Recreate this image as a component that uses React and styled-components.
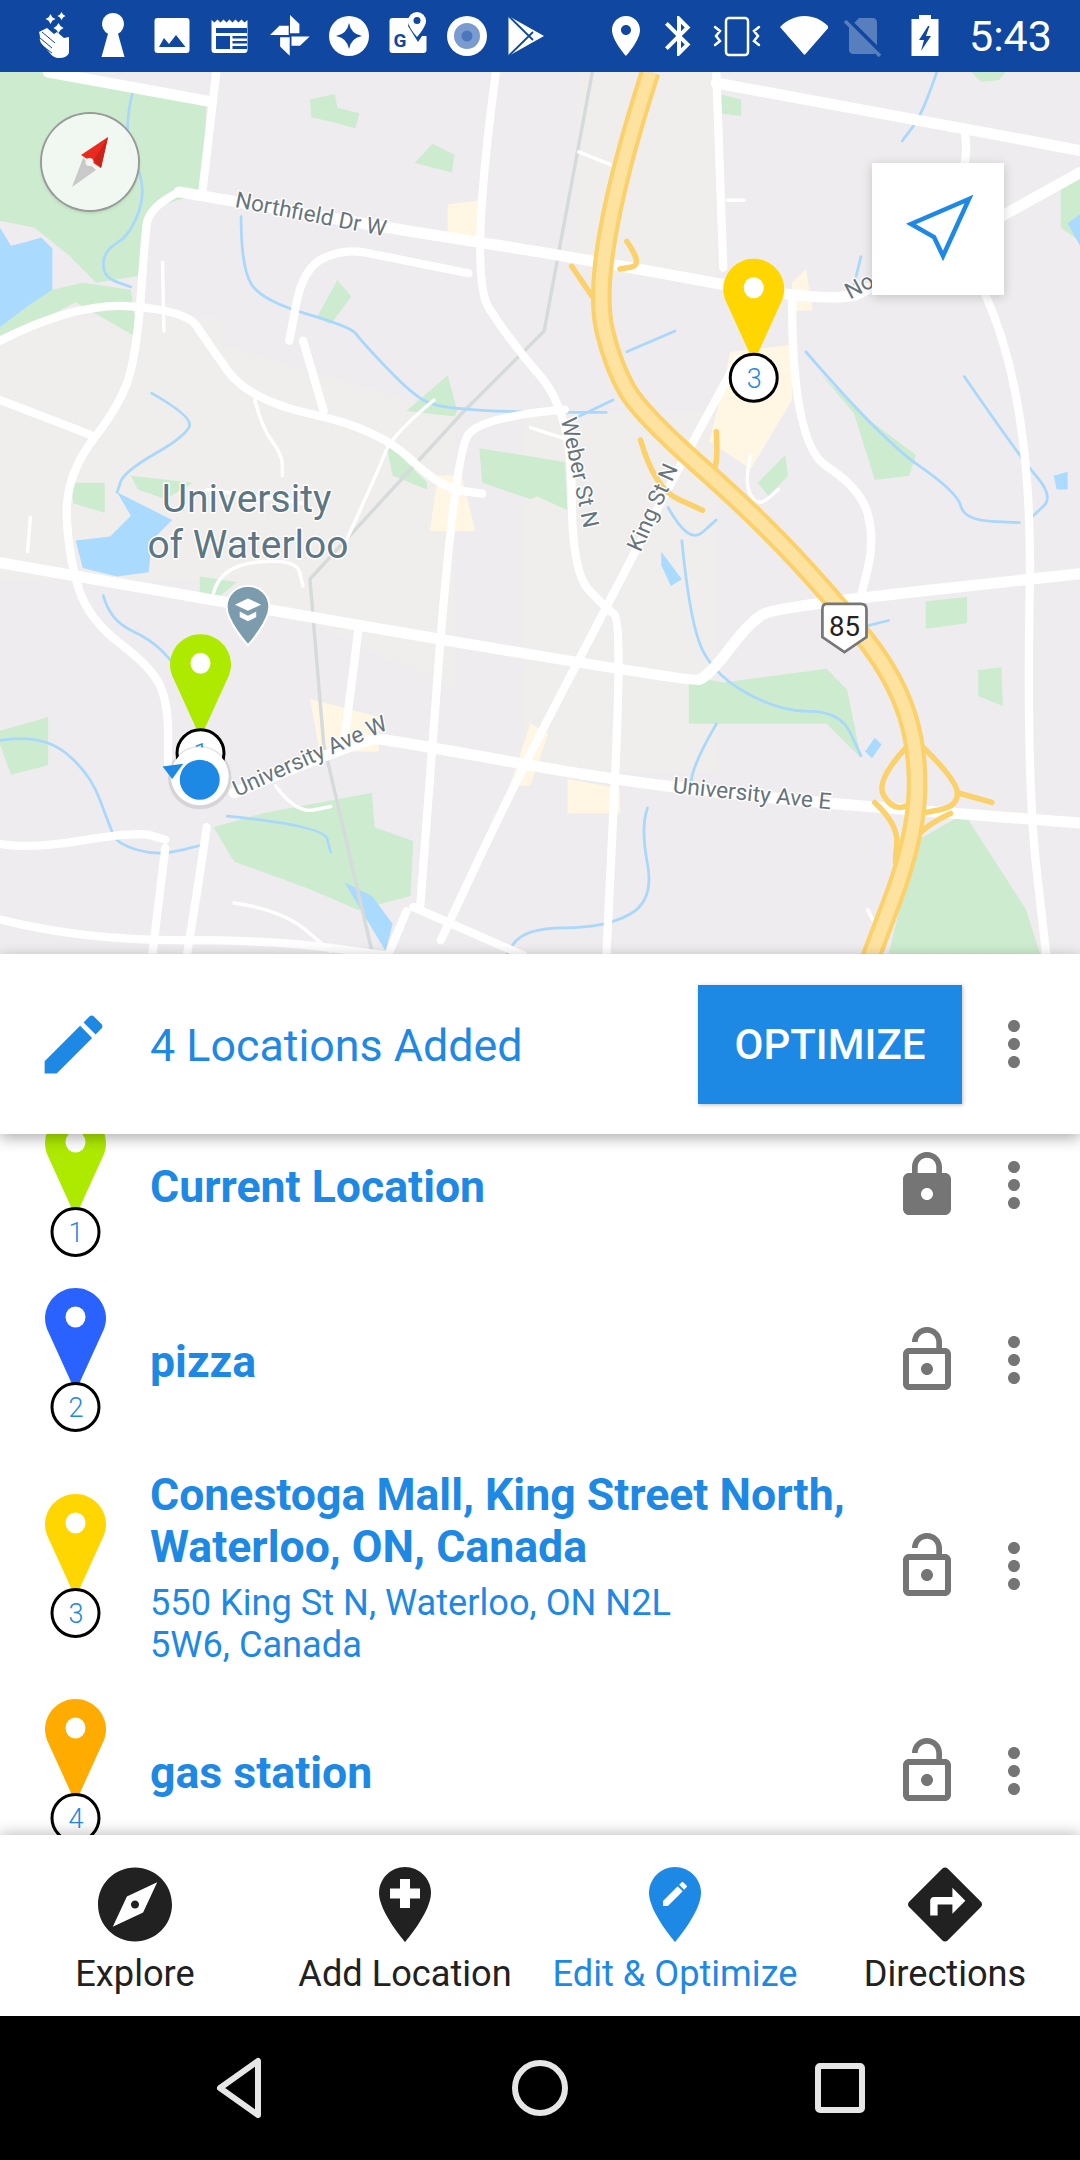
import React from 'react';
import styled, { createGlobalStyle } from 'styled-components';

const BLUE = '#1e88e5';
const GREY = '#757575';

const GlobalStyle = createGlobalStyle`
  html, body { margin: 0; padding: 0; background: #fff; }
  body { font-family: Roboto, "Liberation Sans", sans-serif; }
`;

const Screen = styled.div`
  width: 1080px;
  height: 2160px;
  display: flex;
  flex-direction: column;
  overflow: hidden;
  background: #fff;
`;

const StatusBar = styled.div`
  height: 72px;
  flex: none;
  display: flex;
  align-items: center;
  padding-left: 24px;
  background: #0f47a1;
`;

const StatusCell = styled.div`
  width: ${(p) => p.$w}px;
  flex: none;
  display: flex;
  justify-content: center;
`;

const RightGroup = styled.div`
  margin-left: 44px;
  display: flex;
  align-items: center;
`;

const Clock = styled.span`
  margin-left: 7px;
  font-size: 43px;
  color: #fff;
  line-height: 72px;
`;

const MapArea = styled.div`
  position: relative;
  height: 882px;
  flex: none;
`;

const MapSvg = styled.svg`
  display: block;
  width: 1080px;
  height: 882px;
`;

const MapText = styled.text`
  font-family: Roboto, sans-serif;
  paint-order: stroke;
  stroke: #fff;
  stroke-width: 2px;
  stroke-linejoin: round;
`;

const CompassButton = styled.div`
  position: absolute;
  left: 42px;
  top: 42px;
  width: 96px;
  height: 96px;
  border-radius: 50%;
  box-sizing: border-box;
  background: rgba(244, 249, 244, 0.92);
  box-shadow: 0 0 0 2px #9a9a9a, 0 2px 4px rgba(0, 0, 0, 0.2);
`;

const LocateButton = styled.div`
  position: absolute;
  left: 872px;
  top: 91px;
  width: 132px;
  height: 132px;
  background: #fff;
  box-shadow: 0 2px 10px rgba(0, 0, 0, 0.18);
`;

const Panel = styled.div`
  position: relative;
  z-index: 2;
  height: 180px;
  flex: none;
  display: flex;
  align-items: center;
  padding: 0 30px 0 35px;
  background: #fff;
  box-shadow: 0 4px 14px rgba(0, 0, 0, 0.32);
`;

const PanelIcon = styled.svg`
  width: 77px;
  height: 77px;
  flex: none;
`;

const PanelTitle = styled.div`
  flex: 1;
  margin-left: 38px;
  padding-top: 2px;
  font-size: 44.8px;
  color: ${BLUE};
`;

const OptimizeButton = styled.button`
  width: 264px;
  height: 119px;
  margin-right: 16px;
  padding: 0;
  border: none;
  background: ${BLUE};
  color: #fff;
  font-family: Roboto, sans-serif;
  font-size: 42px;
  font-weight: 500;
  box-shadow: 1px 1px 4px rgba(0, 0, 0, 0.25);
`;

const ActionIcon = styled.svg`
  width: 72px;
  height: 72px;
  flex: none;
  fill: ${GREY};
`;

const ListArea = styled.div`
  flex: 1;
  min-height: 0;
  overflow: hidden;
`;

const ListInner = styled.div`
  margin-top: -36.5px;
`;

const StopRow = styled.div`
  min-height: 175px;
  box-sizing: border-box;
  display: flex;
  align-items: center;
  padding: 0 30px 0 45px;

  ${ActionIcon} + ${ActionIcon} {
    margin-left: 15px;
  }
`;

const StopPin = styled.svg`
  width: 61px;
  height: 144px;
  flex: none;
  overflow: visible;
`;

const StopText = styled.div`
  flex: 1;
  min-width: 0;
  margin-left: 44px;
  padding: 21px 0 18px;
  color: ${BLUE};
`;

const StopTitle = styled.div`
  font-size: 44.6px;
  line-height: 52px;
  font-weight: 700;
`;

const StopAddress = styled.div`
  max-width: 570px;
  margin-top: 9px;
  font-size: 36.2px;
  line-height: 42px;
`;

const BottomNav = styled.div`
  position: relative;
  z-index: 2;
  height: 181px;
  flex: none;
  display: grid;
  grid-template-columns: repeat(4, 270px);
  background: #fff;
  box-shadow: 0 -1px 14px rgba(0, 0, 0, 0.28);
`;

const NavItem = styled.div`
  display: flex;
  flex-direction: column;
  align-items: center;
  padding-top: 32px;
  color: ${(p) => (p.$active ? BLUE : '#212121')};
`;

const NavSvg = styled.svg`
  display: block;
  flex: none;
`;

const NavLabel = styled.div`
  margin-top: 11px;
  font-size: 36.2px;
  line-height: 42px;
`;

const SystemBar = styled.div`
  position: relative;
  z-index: 2;
  height: 144px;
  flex: none;
  display: grid;
  grid-template-columns: repeat(3, 300px);
  justify-content: center;
  justify-items: center;
  align-items: center;
  background: #000;
`;

// map artwork, coordinates are in a 784 wide space
const greens = [
  'M0 52L35 52L150 73L147 140L112 150L100 200L70 205L50 185L25 165L0 160Z',
  'M0 222L38 210L60 205L95 210L100 245L55 219L0 247Z',
  'M225 72L243 68L245 78L261 82L258 93L240 88L226 85Z',
  'M314 104L330 112L328 125L301 118Z',
  'M245 203L255 215L240 235L230 230Z',
  'M522 68L538 72L538 84L522 82Z',
  'M705 52L730 52L725 58L712 59Z',
  'M295 298L325 272L332 298L330 302Z',
  'M348 325L410 335L412 370L390 360L385 362L350 350Z',
  'M280 320L310 350L310 355L285 345Z',
  'M95 345L140 350L120 362L100 355Z',
  'M52 350L76 350L76 372L53 365Z',
  'M595 270L625 300L665 330L660 345L635 348L620 300Z',
  'M672 436L702 433L702 452L672 456Z',
  'M710 486L727 484L728 512L710 505Z',
  'M0 530L35 520L35 555L8 562L0 540Z',
  'M145 418L172 422L160 432L145 430Z',
  'M550 350L570 330L572 345L558 360Z',
  'M155 600L190 590L270 575L272 600L300 610L298 650L260 660L225 645L170 625Z',
  'M645 692L665 610L700 590L745 660L755 692Z',
  'M500 490L525 495L600 485L615 500L625 550L600 525L540 525L500 525Z',
  'M770 130L784 125L784 175L770 165Z',
];

const creams = [
  'M530 255L575 250L575 290L545 340L515 320L525 280Z',
  'M318 345L335 345L345 385L312 385Z',
  'M225 507L275 520L275 545L232 545Z',
  'M385 525L398 532L385 570L370 570Z',
  'M412 565L450 572L450 590L412 590Z',
  'M325 148L350 145L350 175L325 170Z',
  'M575 205L585 195L590 225L575 225Z',
];

const ponds = [
  'M0 165L8 178L20 175L30 172L38 180L38 210L20 222L0 237Z',
  'M85 357L125 377L110 392L108 415L85 418L60 412L55 392L80 389L95 374Z',
  'M250 640L270 650L285 670L280 690Z',
  'M480 400L495 420L487 425L480 410Z',
  'M765 345L775 342L775 355L767 355Z',
  'M635 535L640 540L633 550L628 545Z',
  'M775 162L784 155L784 178Z',
];

const rivers = [
  'M97 64L88 97L107 135L95 170L75 182L75 201L95 208',
  'M175 157L175 194L190 218L255 237L262 247L300 287L320 296L380 299L440 299',
  'M585 255L640 319L695 357L700 377L740 379',
  'M700 273L740 331L765 360L750 374',
  'M495 392L500 444L515 487L565 516L610 516L625 548',
  'M520 525L505 551L500 574',
  'M470 586L465 600L475 653L440 673L380 673L365 697',
  'M0 537L30 532L65 560L80 600L85 612L115 621L150 612',
  'M75 432L80 450L110 464L125 480',
  'M165 592L235 599L240 618',
  'M110 285L140 302L135 316L90 342L85 357',
  'M485 368L500 395L520 377',
  'M445 290L420 302',
  'M680 52L670 82L655 102',
  'M625 186L620 206',
  'M625 455L645 450',
  'M455 255L490 240',
];

const bigRoads = [
  'M130 139L280 165L415 186L605 221L640 205L784 125',
  'M0 408L500 496L515 490L545 450L565 440L784 416',
  'M170 575L265 535L285 537L490 574L784 597',
  'M520 60L700 93L784 109',
  'M35 52L150 73',
];

const midRoads = [
  'M130 139L108 150L105 175L100 247L90 290L47 345L50 406L65 450L110 484L122 510L122 554',
  'M410 297L350 302L330 328L305 658',
  'M520 52L525 194',
  'M575 218L575 322L625 354L635 392L625 432',
  'M360 52L340 200L370 247L415 299L415 415L440 441L452 450L440 697',
  'M536 260L500 325L440 441L375 565L320 682',
  'M715 213L750 290L745 565L760 697',
  'M0 612L20 616L100 603L120 609',
  'M120 615L110 697',
  'M150 600L145 635L135 697',
  'M0 667L60 682L200 682L280 693',
  'M295 661L280 697',
  'M300 658L380 693',
  'M260 458L250 537',
  'M0 290L55 311L67 316',
  'M0 247L55 219L135 225L150 247L180 290L275 311L320 354L350 358',
  'M157 52L147 138',
  'M340 198L280 186L250 180L220 194L210 247',
  'M220 247L235 298',
  'M700 93L702 105L700 121',
];

const thinRoads = [
  'M185 290L190 310L205 330L205 345',
  'M315 290L285 315L275 340L250 395',
  'M20 400L22 375',
  'M545 330L540 350L550 368L565 355',
  'M385 310L410 318',
  'M150 355L220 365',
  'M200 570L215 590L240 585',
  'M170 655L205 660L240 690',
  'M155 430L160 410L215 405L220 425',
  'M630 660L640 680',
  'M420 110L450 122',
  'M528 145L540 145',
  'M118 190L119 240',
];

const interchanges = [
  'M415 193L430 215',
  'M455 175L467 192L450 195',
  'M465 319L475 354L510 370',
  'M520 313L522 348L505 336',
  'M660 540L635 566L648 588L665 582',
  'M668 540L695 566L695 585L668 590',
  'M695 575L720 582',
  'M635 582L652 598L650 625',
  'M690 590L668 600L655 625',
];

const HIGHWAY = [[472, 52], [450, 120], [433, 215], [445, 265], [465, 300], [550, 375], [610, 440], [650, 492], [667, 545], [664, 610], [630, 700]];

// turns a straight line path into a curve through the midpoints of its segments
const toPoints = (d) => d.slice(1).split('L').map((p) => p.split(' ').map(Number));

const smooth = (pts) => {
  let out = `M${pts[0][0]} ${pts[0][1]}`;
  for (let i = 1; i < pts.length - 1; i++) {
    const mx = (pts[i][0] + pts[i + 1][0]) / 2;
    const my = (pts[i][1] + pts[i + 1][1]) / 2;
    out += `Q${pts[i][0]} ${pts[i][1]} ${mx} ${my}`;
  }
  const last = pts[pts.length - 1];
  return `${out}L${last[0]} ${last[1]}`;
};

const Lines = ({ list, stroke, width }) => (
  <g fill="none" stroke={stroke} strokeWidth={width} strokeLinejoin="round" strokeLinecap="round">
    {list.map((d) => <path key={d} d={smooth(toPoints(d))} />)}
  </g>
);

const Pin = ({ color, number }) => (
  <>
    <path
      fill={color}
      d="M30.5 0C47.3 0 61 13.7 61 30.5C61 34 60 38 59 41L34 96H27L2 41C1 38 0 34 0 30.5C0 13.7 13.7 0 30.5 0Z"
    />
    <ellipse cx="30.5" cy="29" rx="10" ry="10.5" fill="#fff" />
    <circle cx="30.5" cy="119" r="23.5" fill="#fff" stroke="#000" strokeWidth="3" />
    <text x="31" y="129" textAnchor="middle" fontSize="27" fontWeight="300" fontFamily="Roboto" fill={BLUE}>
      {number}
    </text>
  </>
);

const MapLabel = ({ x, y, rotate = 0, size = 16.4, color = '#68747c', anchor, children }) => (
  <MapText x={x} y={y} fontSize={size} fill={color} textAnchor={anchor} transform={`rotate(${rotate} ${x} ${y})`}>
    {children}
  </MapText>
);

function MapDrawing() {
  const highway = smooth(HIGHWAY);
  return (
    <MapSvg viewBox="0 52 784 640" preserveAspectRatio="none">
      <rect x="0" y="52" width="784" height="640" fill="#efecef" />
      <path d="M0 230H160V420H0ZM160 250L330 300V500L160 420ZM420 52H520V200H420ZM380 300H520V560H380Z" fill="#f0eeec" />
      {greens.map((d) => <path key={d} d={d} fill="#cdeccf" />)}
      {creams.map((d) => <path key={d} d={d} fill="#fff6e4" />)}
      {ponds.map((d) => <path key={d} d={d} fill="#aadbff" />)}
      <path d="M430 52L395 240L335 300L225 420L235 540L270 690" fill="none" stroke="#d5dadb" strokeWidth="2.5" />
      <Lines list={rivers} stroke="#a9d8fb" width={2} />
      <Lines list={thinRoads} stroke="#fff" width={2.5} />
      <Lines list={midRoads} stroke="#fff" width={6} />
      <Lines list={bigRoads} stroke="#fff" width={8} />
      <Lines list={interchanges} stroke="#fbd16c" width={4} />
      <path d={highway} fill="none" stroke="#fbd16c" strokeWidth="15" />
      <path d={highway} fill="none" stroke="#fee3a0" strokeWidth="9" />

      <MapLabel x="170" y="150" rotate="11">Northfield Dr W</MapLabel>
      <MapLabel x="617" y="217" rotate="-28">No</MapLabel>
      <MapLabel x="407" y="304" rotate="78">Weber St N</MapLabel>
      <MapLabel x="465" y="401" rotate="-66">King St N</MapLabel>
      <MapLabel x="172" y="578" rotate="-24">University Ave W</MapLabel>
      <MapLabel x="488" y="575" rotate="6">University Ave E</MapLabel>
      <MapLabel x="179" y="371" size="28.3" color="#5d7684" anchor="middle">University</MapLabel>
      <MapLabel x="107" y="405" size="28.3" color="#5d7684">of Waterloo</MapLabel>

      {/* campus pin */}
      <path d="M180 425a15 15 0 0 1 15.5 15c0 11-15.5 28-15.5 28s-15.5-17-15.5-28a15 15 0 0 1 15.5-15z" fill="#7c9cad" stroke="#fff" strokeWidth="1.5" />
      <path d="M180 434l9.5 4.5-9.5 4.5-9.5-4.5zM174 443.5v4l6 3 6-3v-4l-6 3z" fill="#fff" />

      {/* highway shield */}
      <path d="M600 438H625Q629 438 629 442V462L613 473L597 462V442Q597 438 600 438Z" fill="#fff" stroke="#777" strokeWidth="2" />
      <text x="613" y="461" textAnchor="middle" fontSize="20" fontFamily="Roboto" fill="#222">85</text>

      <svg x="525" y="187.5" width="44.3" height="104.5" viewBox="0 0 61 144" overflow="visible">
        <Pin color="#ffd600" number="3" />
      </svg>
      <svg x="123.4" y="460" width="44.3" height="104.5" viewBox="0 0 61 144" overflow="visible">
        <Pin color="#aeea00" number="1" />
      </svg>

      {/* my location dot */}
      <circle cx="145" cy="564" r="23" fill="#000" opacity="0.1" />
      <circle cx="145" cy="563" r="21" fill="#fff" />
      <path d="M118 556L133 554L125 565Z" fill={BLUE} />
      <circle cx="145" cy="565.5" r="14.5" fill={BLUE} />
    </MapSvg>
  );
}

// status bar icons, all in a 48 box
const leftIcons = [
  <>
    <path d="M20.5 2l1.8 3.2 3.2 1.8-3.2 1.8-1.8 3.2-1.8-3.2-3.2-1.8 3.2-1.8zM31.5 0l1.5 2.5 2.5 1.5-2.5 1.5-1.5 2.5-1.5-2.5-2.5-1.5 2.5-1.5zM28.5 11l2 3 3 2-3 2-2 3-2-3-3-2 3-2z" fill="#fff" />
    <path d="M9 20l8-4 7 6 3-2 7 6 5-1v16q-2 5-10 5-6 0-10-6l-8-9q-2-3-1-5 0-3-1-6z" fill="#fff" />
    <path d="M12 20l13 11M10 26l12 10M14 35l8 6" stroke="#0f47a1" strokeWidth="1" />
  </>,
  <path d="M24 1a11 11 0 0 1 5 20.8L35.5 45H12.5L19 21.8A11 11 0 0 1 24 1z" fill="#fff" />,
  <>
    <rect x="6.5" y="6" width="35" height="35" rx="3" fill="#fff" />
    <path d="M11 35l5-9 5 6 7-9 9.5 12z" fill="#0f47a1" />
  </>,
  <>
    <path d="M4.5 8l3 2.5 3-3 3 3 3-3 3 3 3-3 3 3 3-3 3 3 3-3 3 3 3-2.5V38a3 3 0 0 1-3 3H7.5a3 3 0 0 1-3-3z" fill="#fff" />
    <path d="M9 16h31v5H9zM9 24h14v13H9zM25.5 24H40v2.5H25.5zM25.5 29H40v2.5H25.5zM25.5 34H40v3H25.5z" fill="#0f47a1" />
  </>,
  <path d="M24 3l9.4 9v9.3H24zM4 23l9.4-9.3h9.3V23zM25.5 24.5h18.2L34 33.7h-8.5zM14.1 25.3h9.6v18.4l-9.6-9.1z" fill="#fff" />,
  <>
    <circle cx="24" cy="24" r="20" fill="#fff" />
    <path d="M24 11q2 11 13 13-11 2-13 13-2-11-13-13 11-2 13-13z" fill="#0f47a1" />
  </>,
  <>
    <path d="M8.5 6H26l-2 8 10 16 4-6h4.5v14a3 3 0 0 1-3 3h-31a3 3 0 0 1-3-3V9a3 3 0 0 1 3-3z" fill="#fff" />
    <text x="16" y="35" textAnchor="middle" fontSize="19" fontWeight="700" fontFamily="Roboto" fill="#0f47a1">G</text>
    <path d="M33 0a9 9 0 0 1 9 9c0 6-9 16-9 16s-9-10-9-16a9 9 0 0 1 9-9z" fill="#fff" />
    <circle cx="33" cy="8.5" r="3.5" fill="#0f47a1" />
  </>,
  <>
    <circle cx="24" cy="24" r="20" fill="#fff" />
    <circle cx="24" cy="24" r="13" fill="#7a9bd0" />
    <circle cx="24" cy="24" r="5.5" fill="#4c77bc" />
  </>,
  <>
    <path d="M6.5 4L42 24L6.5 44Z" fill="#fff" />
    <path d="M6.5 4L31 28M6.5 44L31 20" fill="none" stroke="#0f47a1" strokeWidth="1.8" />
  </>,
];

const rightIcons = [
  { w: 54, art: <path transform="scale(2)" fill="#fff" d="M12 2C8.13 2 5 5.13 5 9c0 5.25 7 13 7 13s7-7.75 7-13c0-3.87-3.13-7-7-7zm0 9.5c-1.38 0-2.5-1.12-2.5-2.5s1.12-2.5 2.5-2.5 2.5 1.12 2.5 2.5-1.12 2.5-2.5 2.5z" /> },
  { w: 52, art: <path transform="scale(2)" fill="#fff" d="M17.71 7.71L12 2h-1v7.59L6.41 5 5 6.41 10.59 12 5 17.59 6.41 19 11 14.41V22h1l5.71-5.71-4.3-4.29 4.3-4.29zM13 5.83l1.88 1.88L13 9.59V5.83zm1.88 10.46L13 18.17v-3.76l1.88 1.88z" /> },
  {
    w: 64,
    art: (
      <>
        <rect x="13" y="6" width="22" height="37" rx="3" fill="none" stroke="#fff" strokeWidth="2.5" />
        <path d="M2 15l5 4-4 5 4 5-5 4M46 15l-5 4 4 5-4 5 5 4" fill="none" stroke="#fff" strokeWidth="2.5" strokeLinecap="round" />
      </>
    ),
  },
  { w: 69, art: <path d="M24.5 4C34 4 42 8 49 15L25.5 42Q24.5 43.5 23.5 42L0 15C7 8 15 4 24.5 4Z" fill="#fff" /> },
  {
    w: 49,
    art: <path transform="scale(2)" fill="#fff" opacity="0.3" d="M18.99 5c0-1.1-.89-2-1.99-2h-7L7.66 5.34 19 16.68 18.99 5zM3.65 3.88L2.38 5.15 5 7.77V19c0 1.1.9 2 2 2h10.01c.35 0 .67-.1.96-.26l1.88 1.88 1.27-1.27L3.65 3.88z" />,
  },
  {
    w: 75,
    art: (
      <>
        <path d="M18 3h12v4h7.5v37h-27V7H18z" fill="#fff" />
        <path d="M27 14L18 28H23L20 39L30 24H25L28.5 14Z" fill="#0f47a1" />
      </>
    ),
  },
];

const EDIT = 'M3 17.25V21h3.75L17.81 9.94l-3.75-3.75L3 17.25zM20.71 7.04c.39-.39.39-1.02 0-1.41l-2.34-2.34c-.39-.39-1.02-.39-1.41 0l-1.83 1.83 3.75 3.75 1.83-1.83z';
const MORE = 'M12 8c1.1 0 2-.9 2-2s-.9-2-2-2-2 .9-2 2 .9 2 2 2zm0 2c-1.1 0-2 .9-2 2s.9 2 2 2 2-.9 2-2-.9-2-2-2zm0 6c-1.1 0-2 .9-2 2s.9 2 2 2 2-.9 2-2-.9-2-2-2z';
const LOCK = 'M18 8h-1V6c0-2.76-2.24-5-5-5S7 3.24 7 6v2H6c-1.1 0-2 .9-2 2v10c0 1.1.9 2 2 2h12c1.1 0 2-.9 2-2V10c0-1.1-.9-2-2-2zm-6 9c-1.1 0-2-.9-2-2s.9-2 2-2 2 .9 2 2-.9 2-2 2zm3.1-9H8.9V6c0-1.71 1.39-3.1 3.1-3.1 1.71 0 3.1 1.39 3.1 3.1v2z';
const LOCK_OPEN = 'M12 17c1.1 0 2-.9 2-2s-.9-2-2-2-2 .9-2 2 .9 2 2 2zm6-9h-1V6c0-2.76-2.24-5-5-5S7 3.24 7 6h1.9c0-1.71 1.39-3.1 3.1-3.1 1.71 0 3.1 1.39 3.1 3.1v2H6c-1.1 0-2 .9-2 2v10c0 1.1.9 2 2 2h12c1.1 0 2-.9 2-2V10c0-1.1-.9-2-2-2zm0 12H6V10h12v10z';
const PIN_OUTLINE = 'M26 0C11.6 0 0 11.7 0 26C0 45 26 75 26 75S52 45 52 26C52 11.7 40.4 0 26 0Z';

const stops = [
  { id: 1, color: '#aeea00', title: 'Current Location', locked: true },
  { id: 2, color: '#2962ff', title: 'pizza' },
  {
    id: 3,
    color: '#ffd600',
    title: 'Conestoga Mall, King Street North, Waterloo, ON, Canada',
    address: '550 King St N, Waterloo, ON N2L 5W6, Canada',
  },
  { id: 4, color: '#ffab00', title: 'gas station' },
];

const tabs = [
  {
    label: 'Explore',
    art: (
      <NavSvg viewBox="2 2 20 20" width="74" height="75">
        <path fill="#212121" d="M12 10.9c-.61 0-1.1.49-1.1 1.1s.49 1.1 1.1 1.1c.61 0 1.1-.49 1.1-1.1s-.49-1.1-1.1-1.1zM12 2C6.48 2 2 6.48 2 12s4.48 10 10 10 10-4.48 10-10S17.52 2 12 2zm2.19 12.19L6 18l3.81-8.19L18 6l-3.81 8.19z" />
      </NavSvg>
    ),
  },
  {
    label: 'Add Location',
    art: (
      <NavSvg viewBox="0 0 52 75" width="52" height="75">
        <path fill="#212121" d={PIN_OUTLINE} />
        <path fill="#fff" d="M21 12h10v9.5h10v10H31V41H21v-9.5H11v-10h10z" />
      </NavSvg>
    ),
  },
  {
    label: 'Edit & Optimize',
    active: true,
    art: (
      <NavSvg viewBox="0 0 52 75" width="52" height="75">
        <path fill={BLUE} d={PIN_OUTLINE} />
        <path fill="#fff" transform="translate(10 11) scale(1.33)" d={EDIT} />
      </NavSvg>
    ),
  },
  {
    label: 'Directions',
    art: (
      <NavSvg viewBox="2 2 20 20" width="74" height="75">
        <path fill="#212121" d="M21.71 11.29l-9-9c-.39-.39-1.02-.39-1.41 0l-9 9c-.39.39-.39 1.02 0 1.41l9 9c.39.39 1.02.39 1.41 0l9-9c.39-.38.39-1.01 0-1.41zM14 14.5V12h-4v3H8v-4c0-.55.45-1 1-1h5V7.5l3.5 3.5-3.5 3.5z" />
      </NavSvg>
    ),
  },
];

export default function App() {
  return (
    <Screen>
      <GlobalStyle />
      <StatusBar>
        {leftIcons.map((art, i) => (
          <StatusCell key={i} $w={59}>
            <svg width="48" height="48" viewBox="0 0 48 48">{art}</svg>
          </StatusCell>
        ))}
        <RightGroup>
          {rightIcons.map((icon, i) => (
            <StatusCell key={i} $w={icon.w}>
              <svg width="48" height="48" viewBox="0 0 48 48">{icon.art}</svg>
            </StatusCell>
          ))}
          <Clock>5:43</Clock>
        </RightGroup>
      </StatusBar>

      <MapArea>
        <MapDrawing />
        <CompassButton>
          <svg width="96" height="96" viewBox="0 0 96 96">
            <path d="M66 23L39 41L59 54Z" fill="#ea2a1f" />
            <path d="M66 23L52 46L59 54Z" fill="#c9231a" />
            <path d="M30 73L41 44L54 56Z" fill="#c9c9c9" />
            <circle cx="47.5" cy="48" r="4" fill="#f4f4f4" />
          </svg>
        </CompassButton>
        <LocateButton>
          <svg width="132" height="132" viewBox="0 0 132 132">
            <path d="M97 36L39 61L62 74L71 93Z" fill="none" stroke={BLUE} strokeWidth="4.5" strokeLinejoin="miter" />
          </svg>
        </LocateButton>
      </MapArea>

      <Panel>
        <PanelIcon viewBox="0 0 24 24"><path d={EDIT} fill={BLUE} /></PanelIcon>
        <PanelTitle>4 Locations Added</PanelTitle>
        <OptimizeButton>OPTIMIZE</OptimizeButton>
        <ActionIcon viewBox="0 0 24 24"><path d={MORE} /></ActionIcon>
      </Panel>

      <ListArea>
        <ListInner>
          {stops.map((stop) => (
            <StopRow key={stop.id}>
              <StopPin viewBox="0 0 61 144"><Pin color={stop.color} number={stop.id} /></StopPin>
              <StopText>
                <StopTitle>{stop.title}</StopTitle>
                {stop.address && <StopAddress>{stop.address}</StopAddress>}
              </StopText>
              <ActionIcon viewBox="0 0 24 24"><path d={stop.locked ? LOCK : LOCK_OPEN} /></ActionIcon>
              <ActionIcon viewBox="0 0 24 24"><path d={MORE} /></ActionIcon>
            </StopRow>
          ))}
        </ListInner>
      </ListArea>

      <BottomNav>
        {tabs.map((tab) => (
          <NavItem key={tab.label} $active={tab.active}>
            {tab.art}
            <NavLabel>{tab.label}</NavLabel>
          </NavItem>
        ))}
      </BottomNav>

      <SystemBar>
        <svg width="60" height="64" viewBox="0 0 60 64">
          <path d="M50 5V59L12 32Z" transform="translate(-2 0)" fill="none" stroke="#e6e6e6" strokeWidth="6" strokeLinejoin="round" />
        </svg>
        <svg width="60" height="60" viewBox="0 0 60 60">
          <circle cx="30" cy="30" r="25" fill="none" stroke="#e6e6e6" strokeWidth="6" />
        </svg>
        <svg width="60" height="60" viewBox="0 0 60 60">
          <rect x="8" y="8" width="44" height="44" rx="2" fill="none" stroke="#e6e6e6" strokeWidth="6" />
        </svg>
      </SystemBar>
    </Screen>
  );
}
